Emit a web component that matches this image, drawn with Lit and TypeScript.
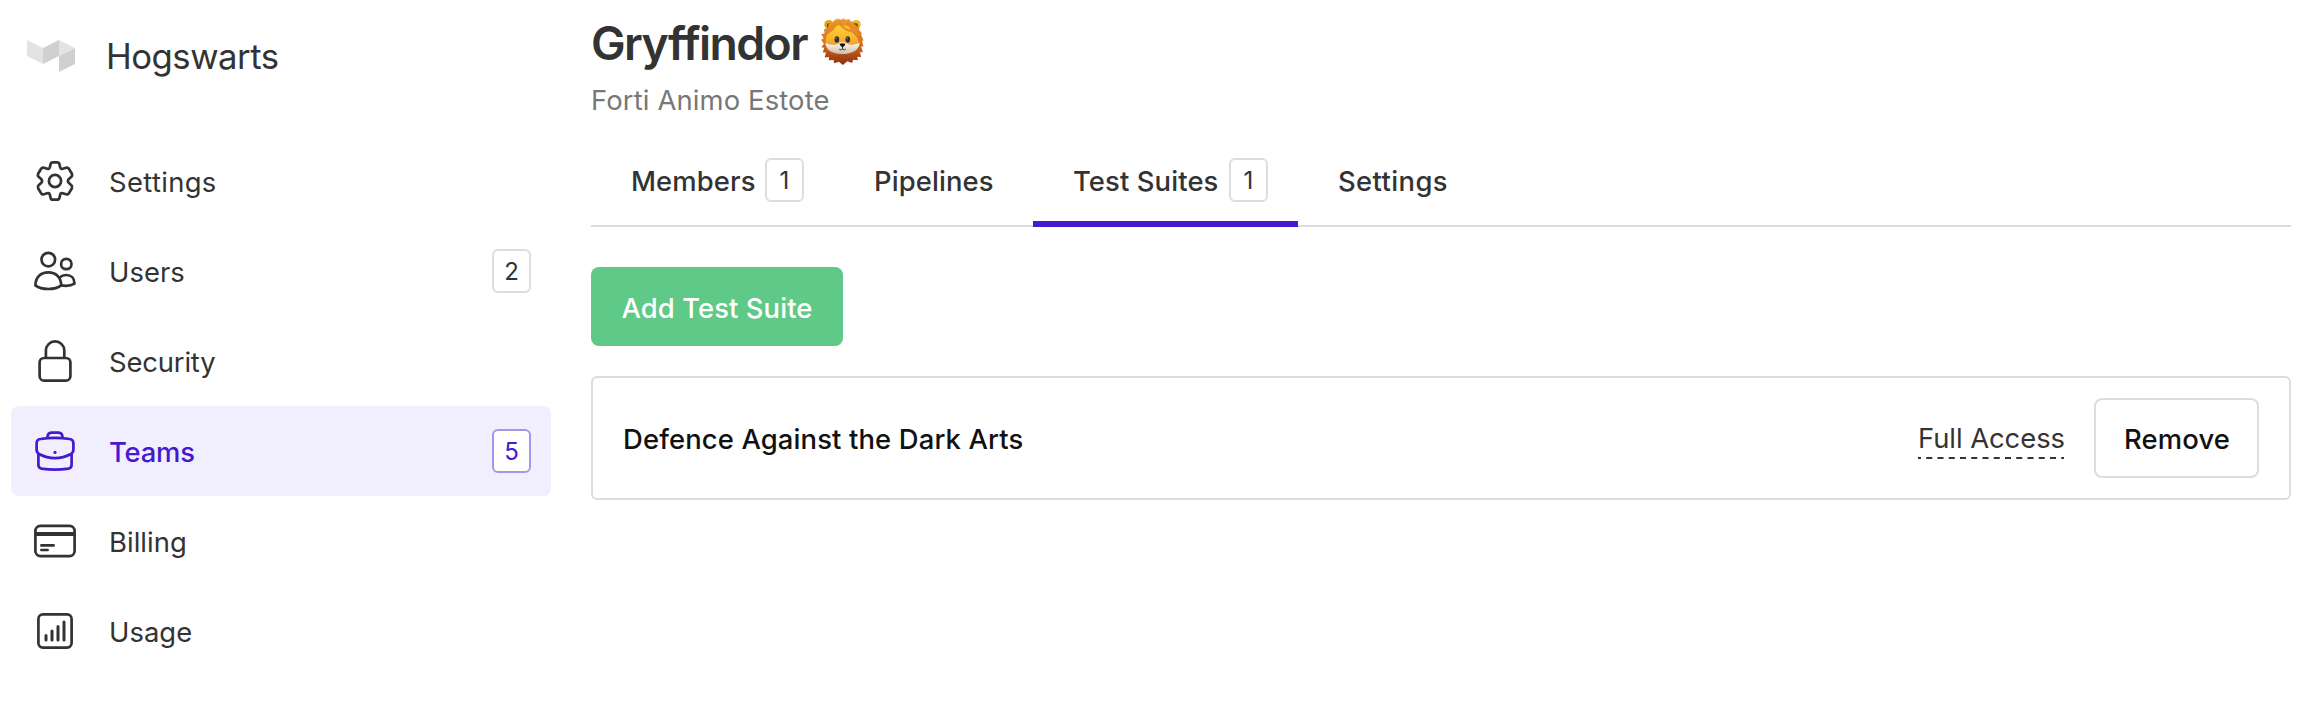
import { LitElement, html, svg, css, nothing } from "lit";
import { customElement } from "lit/decorators.js";
import { classMap } from "lit/directives/class-map.js";

const icons: Record<string, unknown> = {
  settings: svg`<circle cx="22" cy="22" r="6.1"/><path d="M17.6 5.1Q18 3.3 19.8 3.3H24.2Q26 3.3 26.4 5.1L27.2 8.4Q27.8 10.4 29.8 9.8L33 8.7Q34.9 8.2 35.9 9.8L38.9 14.8Q39.7 16.6 38.4 17.8L35.6 20.3Q34.2 22 35.6 23.7L38.4 26.2Q39.7 27.4 38.9 29.2L35.9 34.2Q34.9 35.8 33 35.3L29.8 34.2Q27.8 33.6 27.2 35.6L26.4 38.9Q26 40.7 24.2 40.7H19.8Q18 40.7 17.6 38.9L16.8 35.6Q16.2 33.6 14.2 34.2L11 35.3Q9.1 35.8 8.1 34.2L5.1 29.2Q4.3 27.4 5.6 26.2L8.4 23.7Q9.8 22 8.4 20.3L5.6 17.8Q4.3 16.6 5.1 14.8L8.1 9.8Q9.1 8.2 11 8.7L14.2 9.8Q16.2 10.4 16.8 8.4Z"/>`,
  users: svg`<circle cx="15.3" cy="10.6" r="6.8"/><circle cx="33.3" cy="15" r="5.2"/><path d="M2.4 36.4C2.4 28 8 23.4 15.3 23.4S28.2 28 28.2 36.4C25 38.8 20.5 40 15.3 40S5.6 38.8 2.4 36.4Z"/><path d="M26.8 28.4C28.5 26.7 30.7 26 33.3 26C38 26 41.5 29.3 41.5 34.6C38.5 36.5 33.5 37.3 28.3 36.4"/>`,
  security: svg`<rect x="6.6" y="19" width="30.8" height="22.7" rx="4.5"/><path d="M12.9 19V11.6A9.2 9.2 0 0 1 31.3 11.6V19"/>`,
  teams: svg`<path d="M14.3 9.5C14.3 5 16 3.6 18.5 3.6H25.5C28 3.6 29.7 5 29.7 9.5"/><path d="M3.6 14.5C3.6 11.5 4.8 10.3 7.5 10C17 8.6 27 8.6 36.5 10C39.2 10.3 40.4 11.5 40.4 14.5V20.5C40.4 23 39.5 24.2 37.5 25.2C28 30.3 16 30.3 6.5 25.2C4.5 24.2 3.6 23 3.6 20.5Z"/><path d="M5.4 25V36Q5.4 39 8.5 39.6C17 41 27 41 35.5 39.6Q38.6 39 38.6 36V25"/><circle cx="22" cy="23.4" r="1.6" fill="currentColor" stroke="none"/>`,
  billing: svg`<rect x="2.4" y="6.9" width="39.2" height="30.2" rx="5"/><path d="M2.4 15H41.6" stroke-width="4"/><path d="M8.4 26.4H20.6M8.4 31H14.6" stroke-linecap="round"/>`,
  usage: svg`<rect x="5.4" y="5.4" width="33.2" height="33.2" rx="4.5"/><path d="M13 26.5V31M19 22V31M25 17.5V31M31 13V31" stroke-width="3" stroke-linecap="round"/>`,
};

const logo = html`<svg class="logo" width="48" height="32" viewBox="0 0 48 32">
  <path fill="#e3e3e3" d="M0 0L16 8V24L0 16Z"/><path fill="#d0d0d0" d="M16 8L32 0V16L16 24Z"/>
  <path fill="#e3e3e3" d="M32 0L48 8L32 16Z"/><path fill="#d0d0d0" d="M32 16L48 8V24L32 32Z"/></svg>`;

const lion = html`<svg class="lion" width="43" height="47" viewBox="20 18 130 142" preserveAspectRatio="none" role="img" aria-label="Lion">
  <defs>
    <linearGradient id="mane" x1="0" y1="0" x2="0" y2="1"><stop offset="0" stop-color="#ee9a2c"/><stop offset=".5" stop-color="#d97420"/><stop offset=".78" stop-color="#b14c19"/><stop offset="1" stop-color="#8d3012"/></linearGradient>
    <linearGradient id="face" x1="0" y1="0" x2="0" y2="1"><stop offset="0" stop-color="#fbd52c"/><stop offset=".4" stop-color="#f8b92c"/><stop offset="1" stop-color="#ee8535"/></linearGradient>
    <linearGradient id="chin" x1="0" y1="0" x2="0" y2="1"><stop offset="0" stop-color="#fff8ec"/><stop offset="1" stop-color="#c9bfb2"/></linearGradient>
  </defs>
  <circle cx="44" cy="38" r="14" fill="#e0a51d"/><circle cx="126" cy="38" r="14" fill="#e8ba20"/>
  <circle cx="46" cy="41" r="8" fill="#4f4a16"/><circle cx="124" cy="41" r="8" fill="#6a5a18"/>
  <path fill="url(#mane)" d="M62 22L68 25L66 19L80 23L90 19L92 23L108 22L108 27L122 32L120 36L136 48L134 52L145 66L141 68L149 86L144 87L148 104L141 104L147 122L138 120L141 136L130 135L131 146L117 144L114 154L100 149L86 160L74 150L60 155L58 145L44 146L44 136L31 137L35 122L25 122L30 108L21 106L29 96L20 84L28 80L21 67L31 64L29 52L40 48L44 34L56 32Z"/>
  <path fill="url(#face)" d="M66 43C56 55 44 60 38 70C32 80 33 106 43 116C58 130 110 130 126 116C138 104 136 84 126 73C116 64 110 57 105 45Q86 36 66 43Z"/>
  <path fill="url(#chin)" d="M33 93C50 101 66 101 74 94C80 90 92 90 98 94C108 101 122 100 137 93C137 112 116 124 96 126Q86 128 76 126C52 123 34 112 33 93Z"/>
  <path fill="none" stroke="#e98a28" stroke-width="7" stroke-linecap="round" d="M62 31C64 43 57 54 43 61M77 30C79 43 91 52 112 58M102 33C108 49 122 56 130 68"/>
  <ellipse cx="68" cy="83" rx="7" ry="10" fill="#2c2f3d"/><ellipse cx="101" cy="83" rx="7" ry="10" fill="#2c2f3d"/>
  <circle cx="66" cy="79" r="2" fill="#a9adb8"/><circle cx="99" cy="79" r="2" fill="#a9adb8"/>
  <path fill="#111" d="M76 96Q85 92 94 96Q94 101 85 107Q76 101 76 96Z"/>
  <path fill="none" stroke="#222" stroke-width="2.5" d="M85 104V112M75 112Q80 117 85 112Q90 117 95 112"/>
</svg>`;

interface Entry { id: string; label: string; count?: number; active?: boolean }

const nav: Entry[] = [
  { id: "settings", label: "Settings" },
  { id: "users", label: "Users", count: 2 },
  { id: "security", label: "Security" },
  { id: "teams", label: "Teams", count: 5, active: true },
  { id: "billing", label: "Billing" },
  { id: "usage", label: "Usage" },
];

const tabs: Entry[] = [
  { id: "members", label: "Members", count: 1 },
  { id: "pipelines", label: "Pipelines" },
  { id: "suites", label: "Test Suites", count: 1, active: true },
  { id: "tab-settings", label: "Settings" },
];

@customElement("app-root")
export class AppRoot extends LitElement {
  static styles = css`
    :host {
      display: grid;
      grid-template-columns: 540px 1700px;
      column-gap: 40px;
      padding-left: 11px;
      box-sizing: border-box;
      width: 2314px;
      height: 704px;
      overflow: hidden;
      background: #fff;
      color: #333;
      font: 400 27.4px/40px Inter, sans-serif;
      white-space: nowrap;
    }
    * { box-sizing: border-box; }
    svg { display: block; flex: none; }
    .org { display: flex; align-items: center; height: 112px; padding-left: 16px; font-size: 34.7px; letter-spacing: -0.5px; margin-bottom: 24px; }
    .org span { margin-left: 31px; }
    .item { display: flex; align-items: center; height: 90px; padding: 0 20px 0 22px; border-radius: 8px; }
    .item .label { margin: 1px auto 0 32px; letter-spacing: 0.05px; }
    .item.security .label { letter-spacing: -0.15px; }
    .item.settings .label { letter-spacing: 0.35px; }
    .item.active { background: #f1eefd; color: #4419cf; }
    .item.active .label { font-weight: 500; letter-spacing: -0.2px; }
    .icon { fill: none; stroke: currentColor; stroke-width: 2.7px; stroke-linejoin: round; }
    .badge { display: flex; align-items: center; justify-content: center; width: 39px; height: 44px; border: 2px solid #ddd; border-radius: 6px; background: #fff; font-size: 24px; font-weight: 400; letter-spacing: 0; padding-top: 1px; }
    .item.active .badge { border-color: #a297ec; }
    h1 { display: flex; margin: 0; padding-top: 18px; font: 600 46.3px/50px Inter, sans-serif; letter-spacing: -1.6px; }
    .lion { margin: 0 0 0 14px; }
    .motto { margin: 12px 0 0; color: #777; letter-spacing: 0.14px; }
    .tabs { display: flex; height: 107px; border-bottom: 2px solid #ddd; }
    .tab { display: flex; align-items: center; height: 107px; padding: 0 0 1px 40px; font-weight: 500; letter-spacing: 0.12px; border-bottom: 6px solid transparent; }
    .tab .label { margin-top: 22px; }
    .tab .badge { margin: 20px 0 0 auto; }
    .members { width: 243px; padding-right: 30px; }
    .pipelines { width: 199px; }
    .suites { width: 265px; padding-right: 30px; }
    .tab-settings { letter-spacing: 0.4px; }
    .tab.active { border-color: #4419cf; }
    button { font: 500 27.4px/40px Inter, sans-serif; border-radius: 8px; padding: 3px 0 0; margin: 0; }
    .add { display: block; width: 252px; height: 79px; margin: 40px 0 30px; border: 0; background: #5fc988; color: #fff; letter-spacing: 0.08px; }
    .card { display: flex; align-items: center; height: 124px; padding: 0 30px; border: 2px solid #ddd; border-radius: 6px; color: #111; }
    .name { margin: 1px auto 0 0; font-weight: 500; letter-spacing: 0.14px; }
    .access { width: 146px; color: #333; letter-spacing: -0.05px; margin-right: 30px; }
    .dash { display: block; width: 146px; height: 2px; margin: -1px 0 -1px; }
    .remove { width: 165px; height: 80px; padding: 1px 0 0 1px; background: #fff; border: 2px solid #ddd; color: #111; letter-spacing: 0.18px; }
  `;

  private badge(count?: number) {
    return count === undefined ? nothing : html`<span class="badge">${count}</span>`;
  }

  render() {
    return html`
      <nav>
        <div class="org">${logo}<span>Hogswarts</span></div>
        ${nav.map((n) => html`
          <div class=${classMap({ item: true, [n.id]: true, active: !!n.active })}>
            <svg class="icon" width="44" height="44" viewBox="0 0 44 44">${icons[n.id]}</svg>
            <span class="label">${n.label}</span>${this.badge(n.count)}
          </div>`)}
      </nav>
      <main>
        <h1>Gryffindor${lion}</h1>
        <p class="motto">Forti Animo Estote</p>
        <div class="tabs">
          ${tabs.map((t) => html`
            <div class=${classMap({ tab: true, [t.id]: true, active: !!t.active })}>
              <span class="label">${t.label}</span>${this.badge(t.count)}
            </div>`)}
        </div>
        <button class="add">Add Test Suite</button>
        <div class="card">
          <span class="name">Defence Against the Dark Arts</span>
          <div class="access">Full Access
            <svg class="dash" viewBox="0 0 146 2"><path d="M0 1H146" stroke="#333" stroke-width="2" stroke-dasharray="6 5.25" stroke-dashoffset="3"/></svg>
          </div>
          <button class="remove">Remove</button>
        </div>
      </main>
    `;
  }
}
